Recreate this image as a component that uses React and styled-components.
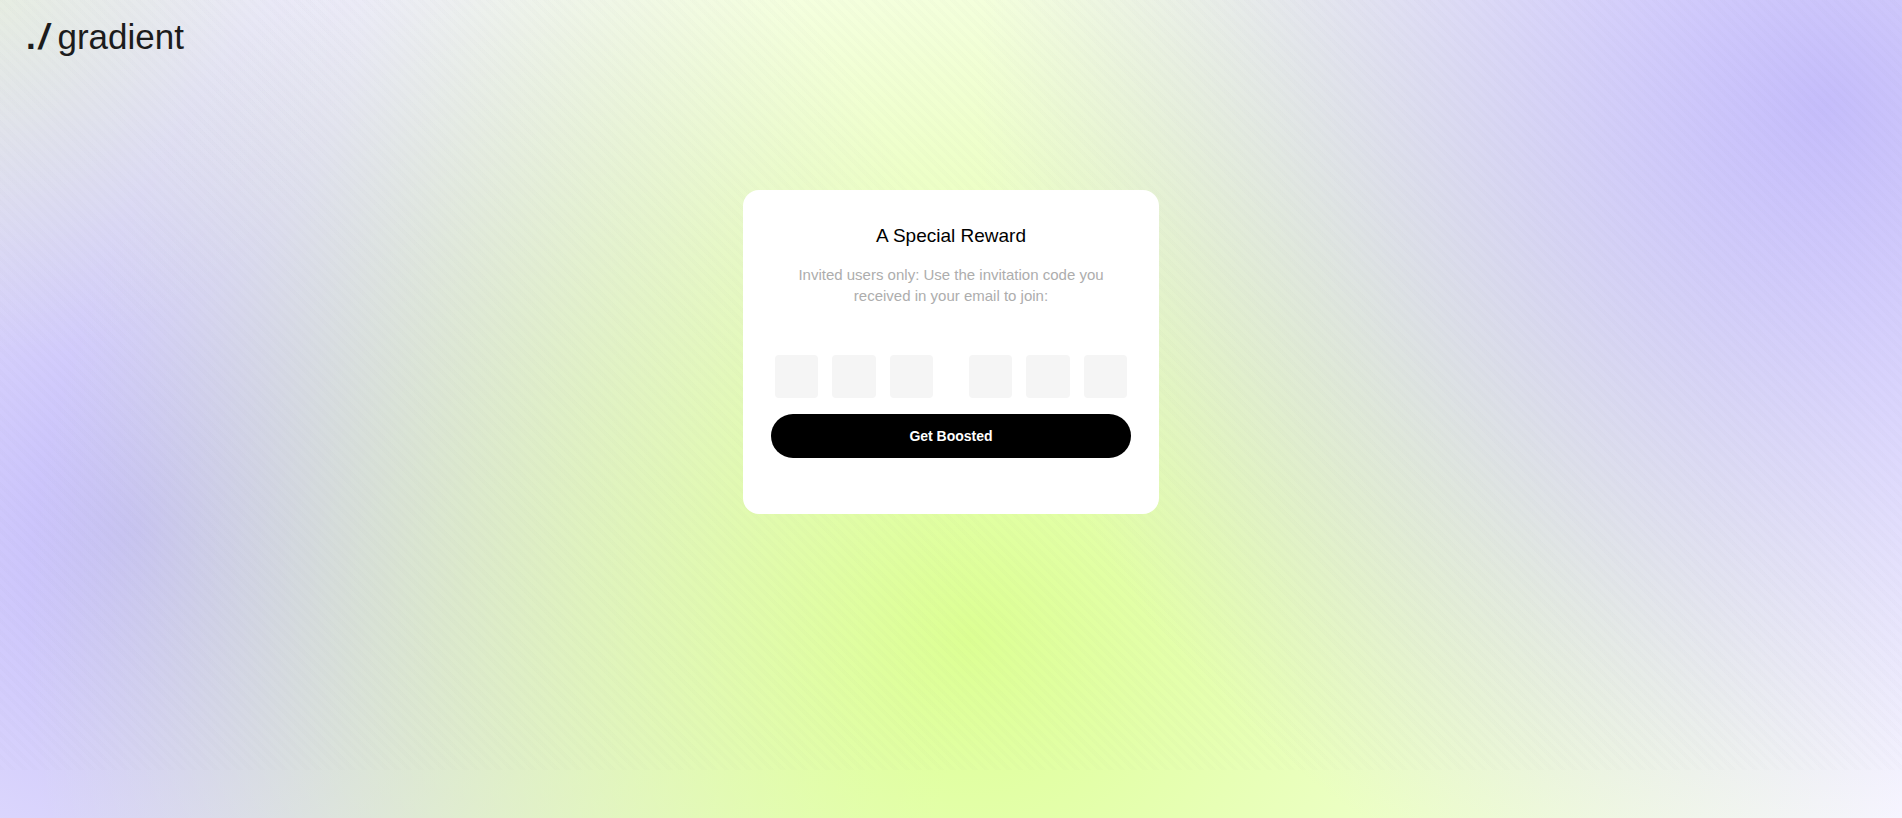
import React, { useRef, useState } from 'react';
import styled, { createGlobalStyle } from 'styled-components';

const GlobalStyle = createGlobalStyle`
  *, *::before, *::after { box-sizing: border-box; }

  body {
    margin: 0;
    font-family: 'Liberation Sans', Helvetica, Arial, sans-serif;
    color: #000;
  }
`;

/* ── Page shell ── */
const Page = styled.div`
  min-height: 100vh;
  display: flex;
  flex-direction: column;
  background:
    radial-gradient(circle 850px at 96% 13%, #c5bdfb, rgba(197, 189, 251, 0)),
    radial-gradient(circle 360px at 0 0, rgba(220, 255, 147, 0.26), rgba(220, 255, 147, 0)),
    radial-gradient(circle 945px at 51% 78%, #dcff93, rgba(220, 255, 147, 0)),
    radial-gradient(circle 850px at 7% 65%, #c5bdfb, rgba(197, 189, 251, 0)),
    #fff;
`;

/* faint diagonal stripes, stopping above the bottom strip */
const Stripes = styled.div`
  flex: 1;
  display: flex;
  flex-direction: column;
  margin-bottom: 48px;
  background: repeating-linear-gradient(
    45deg,
    rgba(90, 90, 110, 0.015) 0 4px,
    rgba(90, 90, 110, 0) 4px 8px
  );
`;

const Header = styled.header`
  display: flex;
  padding: 15px 26px;
`;

const Logo = styled.a`
  display: flex;
  gap: 9px;
  font-size: 35px;
  line-height: 44px;
  color: #1c1c1c;
  text-decoration: none;
`;

const LogoMark = styled.span`
  display: flex;
  gap: 3px;
  font-weight: 700;
`;

const Slash = styled.span`
  font-style: italic;
`;

const Main = styled.main`
  flex: 1;
  display: flex;
  flex-direction: column;
  align-items: center;
  padding: 116px 24px 24px;
`;

/* ── Reward card ── */
const Card = styled.form`
  width: 100%;
  max-width: 416px;
  padding: 32px 28px 56px;
  border-radius: 16px;
  background: #fff;
  text-align: center;
`;

const Title = styled.h1`
  margin: 0;
  font-size: 19px;
  font-weight: 400;
  line-height: 28px;
`;

const Description = styled.p`
  margin: 14px 0 49px;
  padding: 0 20px;
  font-size: 15px;
  line-height: 21px;
  color: #adadad;
`;

const CodeRow = styled.div`
  display: flex;
  gap: 36px;
  padding: 0 4px;
`;

const CodeGroup = styled.div`
  flex: 1;
  display: grid;
  grid-template-columns: repeat(3, 1fr);
  gap: 14px;
`;

const CodeInput = styled.input`
  width: 100%;
  min-width: 0;
  aspect-ratio: 1;
  padding: 0;
  border: 0;
  border-radius: 4px;
  background: #f5f5f5;
  font: inherit;
  font-size: 19px;
  text-align: center;

  &:focus {
    outline: 1px solid #000;
  }
`;

const SubmitButton = styled.button`
  width: 100%;
  height: 44px;
  margin-top: 16px;
  border: 0;
  border-radius: 22px;
  background: #000;
  color: #fff;
  font-family: inherit;
  font-size: 14px;
  font-weight: 700;
  cursor: pointer;
`;

const GROUPS = [[0, 1, 2], [3, 4, 5]];

const App = () => {
  const [code, setCode] = useState(Array(6).fill(''));
  const inputs = useRef([]);

  const handleChange = (index, value) => {
    setCode((prev) => prev.map((c, i) => (i === index ? value.slice(-1) : c)));
    if (value && index < 5) inputs.current[index + 1].focus();
  };

  return (
    <>
      <GlobalStyle />
      <Page>
        <Stripes>
          <Header>
            <Logo href="/">
              <LogoMark>
                <span>.</span>
                <Slash>/</Slash>
              </LogoMark>
              <span>gradient</span>
            </Logo>
          </Header>
          <Main>
            <Card onSubmit={(e) => e.preventDefault()}>
              <Title>A Special Reward</Title>
              <Description>
                Invited users only: Use the invitation code you received in your email to join:
              </Description>
              <CodeRow>
                {GROUPS.map((group) => (
                  <CodeGroup key={group[0]}>
                    {group.map((i) => (
                      <CodeInput
                        key={i}
                        ref={(el) => { inputs.current[i] = el; }}
                        aria-label={`Invitation code character ${i + 1}`}
                        value={code[i]}
                        onChange={(e) => handleChange(i, e.target.value)}
                      />
                    ))}
                  </CodeGroup>
                ))}
              </CodeRow>
              <SubmitButton type="submit">Get Boosted</SubmitButton>
            </Card>
          </Main>
        </Stripes>
      </Page>
    </>
  );
};

export default App;
